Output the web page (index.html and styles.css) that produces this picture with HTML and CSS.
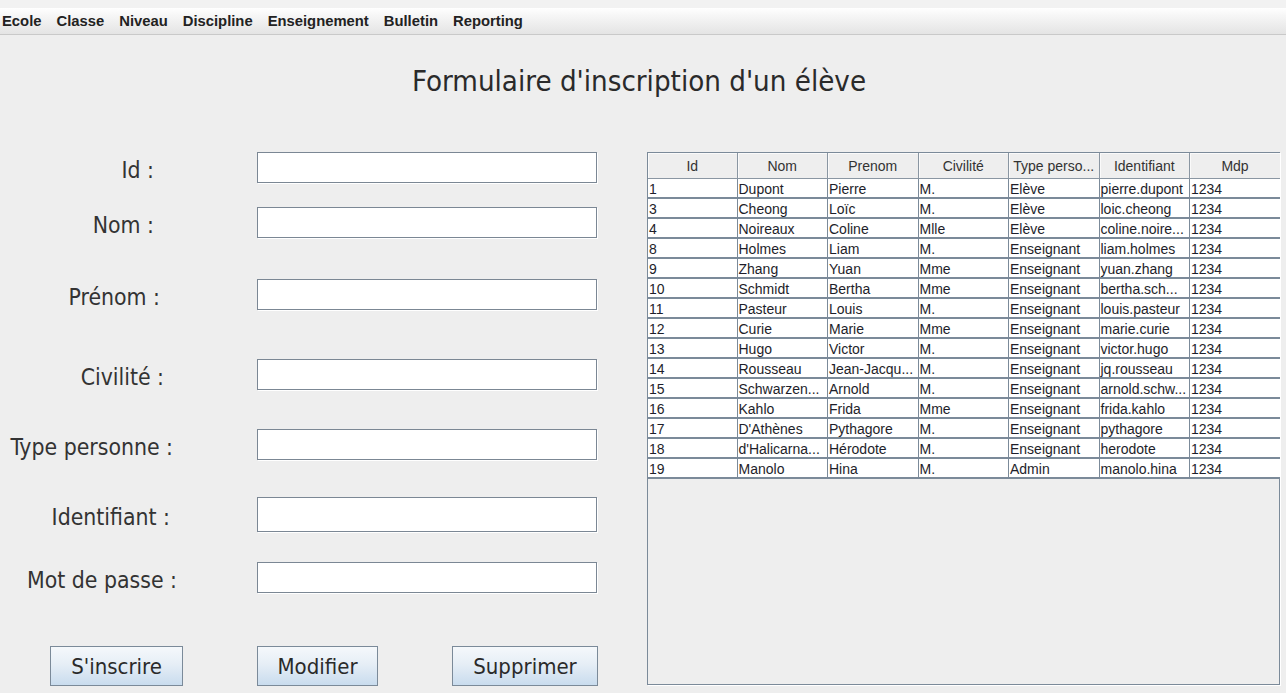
FILE: index.html
```html
<!DOCTYPE html>
<html lang="fr">
<head>
<meta charset="utf-8">
<title>Formulaire d'inscription d'un élève</title>
<link rel="stylesheet" href="styles.css">
</head>
<body>
<div class="topstrip"></div>
<nav class="menubar">
  <span class="menu">Ecole</span>
  <span class="menu">Classe</span>
  <span class="menu">Niveau</span>
  <span class="menu">Discipline</span>
  <span class="menu">Enseignement</span>
  <span class="menu">Bulletin</span>
  <span class="menu">Reporting</span>
</nav>
<header class="titlebox">
  <h1 class="title">Formulaire d'inscription d'un élève</h1>
</header>
<main class="content">
  <section class="formpane">
    <div class="row r-id"><label class="lbl">Id :</label><div class="field"></div></div>
    <div class="row r-nom"><label class="lbl">Nom :</label><div class="field"></div></div>
    <div class="row r-prenom"><label class="lbl">Prénom :</label><div class="field"></div></div>
    <div class="row r-civ"><label class="lbl">Civilité :</label><div class="field"></div></div>
    <div class="row r-type"><label class="lbl">Type personne :</label><div class="field"></div></div>
    <div class="row r-ident"><label class="lbl">Identifiant :</label><div class="field tall"></div></div>
    <div class="row r-mdp"><label class="lbl">Mot de passe :</label><div class="field"></div></div>
    <div class="buttons">
      <button class="btn b1">S'inscrire</button>
      <button class="btn b2">Modifier</button>
      <button class="btn b3">Supprimer</button>
    </div>
  </section>
  <section class="tablepane">
    <table class="grid">
      <thead>
        <tr><th>Id</th><th>Nom</th><th>Prenom</th><th>Civilité</th><th>Type perso...</th><th>Identifiant</th><th>Mdp</th></tr>
      </thead>
      <tbody>
        <tr><td>1</td><td>Dupont</td><td>Pierre</td><td>M.</td><td>Elève</td><td>pierre.dupont</td><td>1234</td></tr>
        <tr><td>3</td><td>Cheong</td><td>Loïc</td><td>M.</td><td>Elève</td><td>loic.cheong</td><td>1234</td></tr>
        <tr><td>4</td><td>Noireaux</td><td>Coline</td><td>Mlle</td><td>Elève</td><td>coline.noire...</td><td>1234</td></tr>
        <tr><td>8</td><td>Holmes</td><td>Liam</td><td>M.</td><td>Enseignant</td><td>liam.holmes</td><td>1234</td></tr>
        <tr><td>9</td><td>Zhang</td><td>Yuan</td><td>Mme</td><td>Enseignant</td><td>yuan.zhang</td><td>1234</td></tr>
        <tr><td>10</td><td>Schmidt</td><td>Bertha</td><td>Mme</td><td>Enseignant</td><td>bertha.sch...</td><td>1234</td></tr>
        <tr><td>11</td><td>Pasteur</td><td>Louis</td><td>M.</td><td>Enseignant</td><td>louis.pasteur</td><td>1234</td></tr>
        <tr><td>12</td><td>Curie</td><td>Marie</td><td>Mme</td><td>Enseignant</td><td>marie.curie</td><td>1234</td></tr>
        <tr><td>13</td><td>Hugo</td><td>Victor</td><td>M.</td><td>Enseignant</td><td>victor.hugo</td><td>1234</td></tr>
        <tr><td>14</td><td>Rousseau</td><td>Jean-Jacqu...</td><td>M.</td><td>Enseignant</td><td>jq.rousseau</td><td>1234</td></tr>
        <tr><td>15</td><td>Schwarzen...</td><td>Arnold</td><td>M.</td><td>Enseignant</td><td>arnold.schw...</td><td>1234</td></tr>
        <tr><td>16</td><td>Kahlo</td><td>Frida</td><td>Mme</td><td>Enseignant</td><td>frida.kahlo</td><td>1234</td></tr>
        <tr><td>17</td><td>D'Athènes</td><td>Pythagore</td><td>M.</td><td>Enseignant</td><td>pythagore</td><td>1234</td></tr>
        <tr><td>18</td><td>d'Halicarna...</td><td>Hérodote</td><td>M.</td><td>Enseignant</td><td>herodote</td><td>1234</td></tr>
        <tr><td>19</td><td>Manolo</td><td>Hina</td><td>M.</td><td>Admin</td><td>manolo.hina</td><td>1234</td></tr>
      </tbody>
    </table>
  </section>
</main>
</body>
</html>
```
FILE: styles.css
```css
* { box-sizing: border-box; }
html, body {
  margin: 0;
  padding: 0;
  background: #eeeeee;
  width: 1286px;
  height: 693px;
  overflow: hidden;
}
body {
  font-family: "DejaVu Sans Condensed", "DejaVu Sans", sans-serif;
  color: #333333;
}

.topstrip {
  height: 8px;
  background: #f2f2f2;
}
.menubar {
  height: 27px;
  display: flex;
  align-items: center;
  background: linear-gradient(#ffffff, #f6f6f6 30%, #e4e4e4 100%);
  border-bottom: 1px solid #c9c9c9;
  font-family: "Liberation Sans", Arial, sans-serif;
  font-weight: bold;
  font-size: 14.8px;
  color: #222222;
  padding-left: 2px;
}
.menu { margin-right: 15px; white-space: nowrap; }

.titlebox {
  height: 117px;
  padding-top: 26px;
}
.title {
  margin: 0;
  text-align: center;
  font-weight: normal;
  font-size: 29.2px;
  line-height: 40px;
  color: #2a2a2a;
  padding-right: 8px;
}

.content {
  display: flex;
  align-items: flex-start;
}
.formpane {
  width: 647px;
  flex: none;
}
.row {
  display: grid;
  grid-template-columns: 180px 340px;
  column-gap: 77px;
  align-items: center;
}
.lbl {
  font-size: 22.8px;
  text-align: right;
  padding-top: 4px;
  white-space: nowrap;
}
.field {
  height: 31px;
  background: #ffffff;
  border: 1px solid #7b8794;
  box-shadow: 1px 1px 0 #ffffff;
}
.field.tall { height: 35px; }

.r-id .lbl { padding-right: 26px; }
.r-nom { margin-top: 24px; }
.r-nom .lbl { padding-right: 26px; }
.r-prenom { margin-top: 41px; }
.r-prenom .lbl { padding-right: 20px; }
.r-civ { margin-top: 49px; }
.r-civ .lbl { padding-right: 16px; }
.r-type { margin-top: 39px; }
.r-type .lbl { padding-right: 7px; }
.r-ident { margin-top: 37px; }
.r-ident .lbl { padding-right: 10px; }
.r-mdp { margin-top: 30px; }
.r-mdp .lbl { padding-right: 3px; }

.buttons {
  display: flex;
  gap: 74px;
  padding-left: 50px;
  margin-top: 53px;
}
.btn {
  height: 40px;
  border: 1px solid #7b8a99;
  background: linear-gradient(#f5f8fb, #e6eef6 45%, #c9dcee 100%);
  font-family: "DejaVu Sans Condensed", "DejaVu Sans", sans-serif;
  font-size: 22px;
  color: #2a2a2a;
  padding: 0;
  border-radius: 0;
}
.b1 { width: 133px; }
.b2 { width: 121px; }
.b3 { width: 146px; }

.tablepane {
  width: 633px;
  height: 533px;
  border: 1px solid #7b8a99;
  box-shadow: 1px 1px 0 #ffffff;
  background: #eeeeee;
  flex: none;
}
.grid {
  border-collapse: collapse;
  table-layout: fixed;
  width: 632px;
  font-family: "Liberation Sans", Arial, sans-serif;
  font-size: 14px;
  color: #1e1e2a;
}
.grid th {
  height: 25px;
  font-weight: normal;
  background: #eeeeee;
  color: #333333;
  border-right: 1px solid #8a96a2;
  border-bottom: 1px solid #8a96a2;
  box-shadow: inset 1px 1px 0 #fafafa;
  text-align: center;
  padding: 2px 2px 0;
  white-space: nowrap;
  overflow: hidden;
}
.grid th:first-child, .grid td:first-child { width: 89px; }
.grid td {
  height: 20px;
  background: #ffffff;
  border-right: 1px solid #7b8a99;
  border-bottom: 2px solid #7b8a99;
  padding: 2px 1px 0;
  line-height: 16px;
  white-space: nowrap;
  overflow: hidden;
}
.grid th:last-child, .grid td:last-child { border-right: none; }
```
